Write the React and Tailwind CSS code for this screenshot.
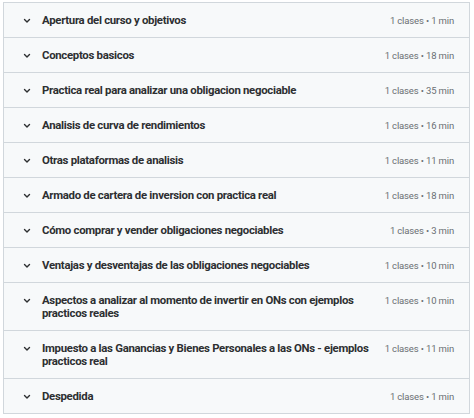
const sections = [
  { title: 'Apertura del curso y objetivos', meta: '1 clases • 1 min' },
  { title: 'Conceptos basicos', meta: '1 clases • 18 min' },
  { title: 'Practica real para analizar una obligacion negociable', meta: '1 clases • 35 min' },
  { title: 'Analisis de curva de rendimientos', meta: '1 clases • 16 min' },
  { title: 'Otras plataformas de analisis', meta: '1 clases • 11 min' },
  { title: 'Armado de cartera de inversion con practica real', meta: '1 clases • 18 min' },
  { title: 'Cómo comprar y vender obligaciones negociables', meta: '1 clases • 3 min' },
  { title: 'Ventajas y desventajas de las obligaciones negociables', meta: '1 clases • 10 min' },
  { title: 'Aspectos a analizar al momento de invertir en ONs con ejemplos practicos reales', meta: '1 clases • 10 min' },
  { title: 'Impuesto a las Ganancias y Bienes Personales a las ONs - ejemplos practicos real', meta: '1 clases • 11 min' },
  { title: 'Despedida', meta: '1 clases • 1 min' },
]

function Chevron() {
  return (
    <svg width="10" height="13" viewBox="0 0 10 13" className="shrink-0 text-[#2d2f31]">
      <path d="M2.5 5.5l2.5 2.5 2.5-2.5" fill="none" stroke="currentColor" strokeWidth="1.4" strokeLinecap="round" strokeLinejoin="round" />
    </svg>
  )
}

export default function App() {
  return (
    <div className="bg-white w-[474px] h-[418px] pt-[2px] pl-[3px] font-['Roboto',Arial,sans-serif]">
      <div className="w-[467px] border border-b-0 border-[#d1d7dc]">
        {sections.map((s) => (
          <div
            key={s.title}
            className="flex items-start bg-[#f7f9fa] border-b border-[#d1d7dc] pl-[18px] pr-[15px] pt-[11px] pb-[10px]"
          >
            <Chevron />
            <div className="ml-[10px] flex-1 text-[11.4px] tracking-[-0.3px] leading-[13px] font-bold text-[#2d2f31]">
              {s.title}
            </div>
            <div className="ml-1 shrink-0 text-[9.5px] tracking-[-0.15px] leading-[13px] text-[#6a6f73]">{s.meta}</div>
          </div>
        ))}
      </div>
    </div>
  )
}
